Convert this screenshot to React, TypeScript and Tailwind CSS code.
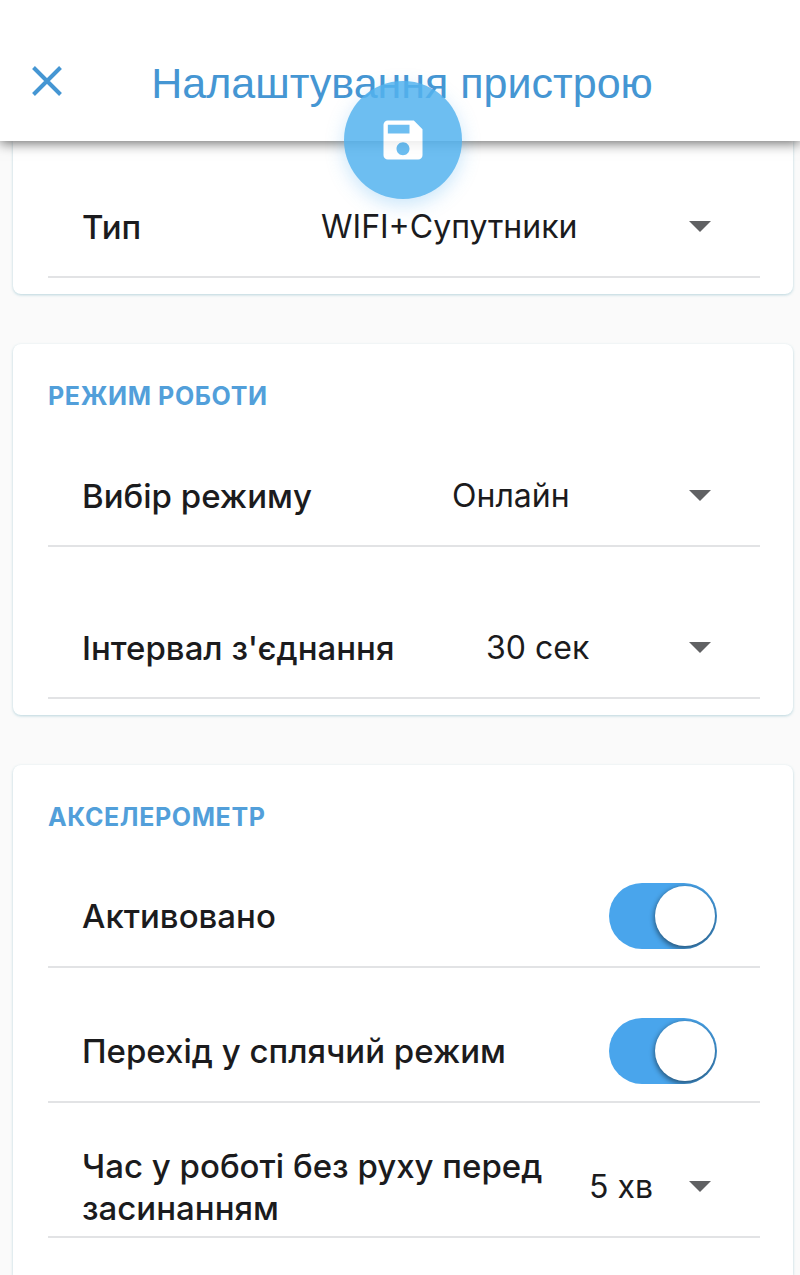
import React, { useId, useState } from "react";
import { MdSave } from "react-icons/md";

type SelectRowProps = {
  label: string;
  options: string[];
  selectClass: string;
};

const SelectRow = ({ label, options, selectClass }: SelectRowProps) => {
  const id = useId();
  const [value, setValue] = useState(options[0]);

  return (
    <div className="flex items-center justify-between min-h-[102px] pt-[2px] border-b-2 border-[#e2e3e5] pl-[34px] pr-[43px]">
      <label htmlFor={id} className="font-medium leading-[42px]">
        {label}
      </label>
      <div className="relative flex shrink-0">
        <select
          id={id}
          value={value}
          onChange={(e) => setValue(e.target.value)}
          className={`appearance-none bg-transparent h-12 pr-12 text-[32px] outline-none cursor-pointer ${selectClass}`}
        >
          {options.map((option) => (
            <option key={option}>{option}</option>
          ))}
        </select>
        <svg
          viewBox="0 0 22 11"
          className="absolute right-[6px] top-[18px] w-[22px] h-[11px] pointer-events-none fill-[#606163]"
        >
          <path d="M0 0h22L11 11z" />
        </svg>
      </div>
    </div>
  );
};

const SwitchRow = ({ label }: { label: string }) => {
  const id = useId();
  const [checked, setChecked] = useState(true);

  return (
    <div className="flex items-center justify-between min-h-[102px] border-b-2 border-[#e2e3e5] pl-[34px] pr-[43px]">
      <label htmlFor={id} className="font-medium leading-[42px]">
        {label}
      </label>
      <input
        id={id}
        type="checkbox"
        role="switch"
        checked={checked}
        onChange={(e) => setChecked(e.target.checked)}
        className="appearance-none shrink-0 flex items-center w-[108px] h-[66px] px-[2px] rounded-full bg-gray-300 checked:bg-[#49a5ec] checked:justify-end overflow-hidden cursor-pointer before:block before:size-[60px] before:rounded-full before:bg-white before:shadow-[0_2px_5px_1px_rgba(0,0,0,0.45)]"
      />
    </div>
  );
};

const cardShadow = "shadow-[0_1px_3px_rgba(90,160,180,0.4)]";

const App = () => {
  return (
    <div className="flex flex-col min-h-screen bg-[#fafafa] text-[#1b1b1d] text-[33px] font-[Inter,sans-serif]">
      <header className="sticky top-0 z-10 pt-6 bg-white shadow-[0_2px_12px_rgba(0,0,0,0.6)]">
        <div className="grid grid-cols-[94px_1fr_90px] items-center h-[117px]">
          <button
            type="button"
            aria-label="Закрити"
            className="flex items-center justify-center h-16 pb-1 cursor-pointer text-[#4596d3]"
          >
            <svg
              viewBox="0 0 30 30"
              className="size-[30px] stroke-current"
              fill="none"
              strokeWidth="4"
            >
              <path d="M1.5 1.5l27 27M28.5 1.5l-27 27" />
            </svg>
          </button>
          <h1 className="text-center whitespace-nowrap text-[43px] leading-[48px] text-[#4596d3] font-[Liberation_Sans,sans-serif]">
            Налаштування пристрою
          </h1>
        </div>
        <div className="absolute inset-x-0 top-[81px] flex justify-center pl-[13px] pr-[7px] pointer-events-none">
          <button
            type="button"
            aria-label="Зберегти"
            className="flex items-center justify-center size-[118px] rounded-full bg-[#54b3ef] opacity-85 text-white shadow-[0_6px_18px_rgba(79,176,241,0.35)] pointer-events-auto cursor-pointer"
          >
            <MdSave className="size-[52px]" />
          </button>
        </div>
      </header>

      <main className="flex flex-col flex-1 gap-[50px] pl-[13px] pr-[7px]">
        <section
          className={`bg-white rounded-b-lg pt-[35px] pb-4 pl-[35px] pr-[33px] ${cardShadow}`}
        >
          <SelectRow
            label="Тип"
            options={["WIFI+Супутники", "WIFI", "Супутники"]}
            selectClass="w-[396px]"
          />
        </section>

        <section
          className={`bg-white rounded-lg pb-4 pl-[35px] pr-[33px] ${cardShadow}`}
        >
          <h2 className="pt-9 pb-[33px] text-[25px] leading-8 font-bold tracking-wide text-[#529fda]">
            РЕЖИМ РОБОТИ
          </h2>
          <div className="flex flex-col gap-[50px]">
            <SelectRow
              label="Вибір режиму"
              options={["Онлайн", "Інтервал"]}
              selectClass="w-[265px]"
            />
            <SelectRow
              label="Інтервал з'єднання"
              options={["30 сек", "1 хв", "5 хв"]}
              selectClass="w-[231px]"
            />
          </div>
        </section>

        <section
          className={`flex-1 bg-white rounded-t-lg pl-[35px] pr-[33px] ${cardShadow}`}
        >
          <h2 className="pt-9 pb-[33px] text-[25px] leading-8 font-bold tracking-wide text-[#529fda]">
            АКСЕЛЕРОМЕТР
          </h2>
          <div className="flex flex-col gap-[33px]">
            <SwitchRow label="Активовано" />
            <SwitchRow label="Перехід у сплячий режим" />
            <SelectRow
              label="Час у роботі без руху перед засинанням"
              options={["5 хв", "10 хв", "15 хв"]}
              selectClass="w-[128px]"
            />
          </div>
        </section>
      </main>
    </div>
  );
};

export default App;
